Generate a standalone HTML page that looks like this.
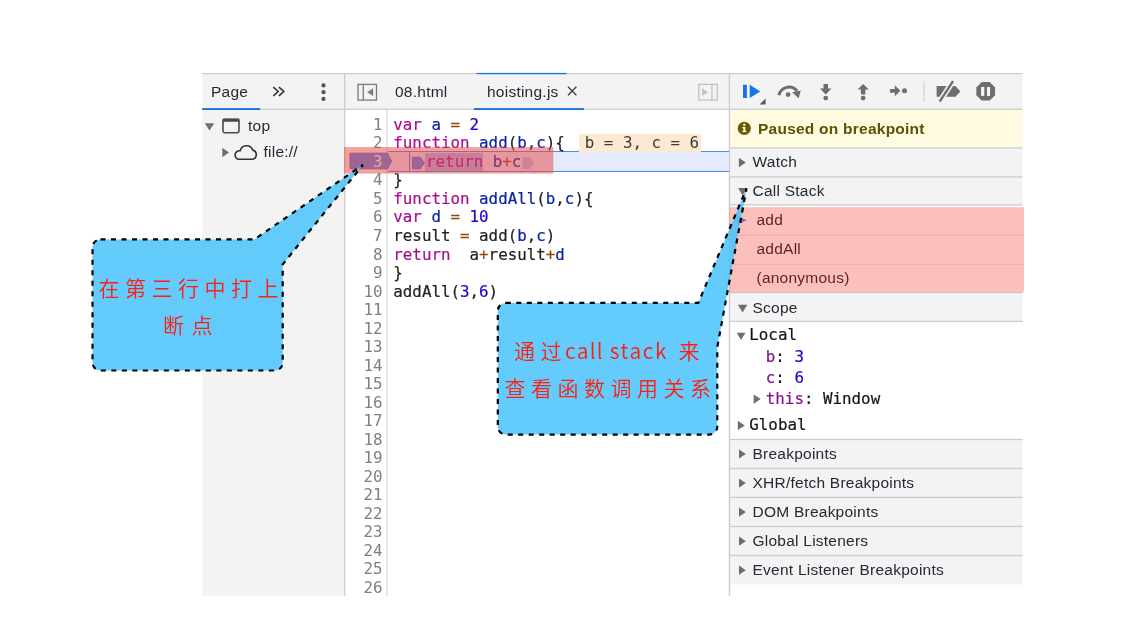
<!DOCTYPE html>
<html lang="zh">
<head>
<meta charset="utf-8">
<title>Sources debugger</title>
<style>
html,body{margin:0;padding:0;background:#fff;}
body{width:1142px;height:636px;position:relative;overflow:hidden;font-family:"Liberation Sans","Noto Sans CJK SC",sans-serif;font-size:15.5px;letter-spacing:0.24px;color:#232a35;}
.abs{position:absolute;}
.t{position:absolute;white-space:pre;line-height:20px;height:20px;}
.mono{font-family:"DejaVu Sans Mono","Liberation Mono",monospace;font-size:15.83px;letter-spacing:0;}
.sc{-webkit-text-stroke:0.2px;}
.k{color:#aa0d91}.d{color:#0d22aa}.n{color:#1c00cf}.o{color:#994500}.v{color:#0d22aa}.b{color:#151515}
#code{-webkit-text-stroke:0.2px;left:393.3px;top:115.9px;line-height:18.52px;margin:0;color:#222;}
#gut{left:346px;top:115.9px;width:36.5px;text-align:right;line-height:18.52px;margin:0;color:#808080;}
.note{color:#ff1e10;font-family:"Noto Sans CJK SC","Liberation Sans",sans-serif;font-weight:350;font-size:21px;letter-spacing:5.5px;line-height:28px;white-space:pre;}
</style>
</head>
<body>
<div id="wrap" style="position:absolute;left:0;top:0;width:1142px;height:636px;will-change:transform;">
<!-- panels -->
<svg class="abs" style="left:0;top:0;" width="1142" height="636" viewBox="0 0 1142 636">
  <!-- panel backgrounds -->
  <rect x="202.2" y="73" width="142.5" height="523" fill="#f3f3f3"/>
  <rect x="344" y="73" width="678.6" height="36.5" fill="#f3f3f3"/>
  <rect x="730" y="109.5" width="292.6" height="38.5" fill="#fffbe1"/>
  <rect x="730" y="148" width="292.6" height="57" fill="#f3f3f3"/>
  <rect x="730" y="292.6" width="292.6" height="28.5" fill="#f3f3f3"/>
  <rect x="730" y="439.5" width="292.6" height="145" fill="#f3f3f3"/>
  <!-- horizontal rules -->
  <g fill="#cdcdcd">
    <rect x="202.2" y="72.95" width="820.4" height="1.3"/>
    <rect x="202.2" y="108.65" width="820.4" height="1.3"/>
    <rect x="730" y="147.35" width="292.6" height="1.3"/>
    <rect x="730" y="176.25" width="292.6" height="1.3"/>
    <rect x="730" y="204.25" width="292.6" height="1.3"/>
    <rect x="730" y="291.95" width="292.6" height="1.3"/>
    <rect x="730" y="320.75" width="292.6" height="1.3"/>
    <rect x="730" y="438.85" width="292.6" height="1.3"/>
    <rect x="730" y="467.85" width="292.6" height="1.3"/>
    <rect x="730" y="496.75" width="292.6" height="1.3"/>
    <rect x="730" y="525.85" width="292.6" height="1.3"/>
    <rect x="730" y="554.85" width="292.6" height="1.3"/>
  </g>
  <rect x="730" y="234.6" width="292.6" height="1.2" fill="#e6e6e6"/>
  <rect x="730" y="263.7" width="292.6" height="1.2" fill="#e6e6e6"/>
  <!-- vertical rules -->
  <rect x="344.05" y="73" width="1.3" height="523" fill="#cdcdcd"/>
  <rect x="728.75" y="73" width="1.4" height="523" fill="#cdcdcd"/>
  <rect x="386.3" y="110" width="1.4" height="486" fill="#dcdcdc"/>
  <!-- tab indicators -->
  <rect x="202.2" y="108.1" width="58" height="1.9" fill="#1a73e8"/>
  <rect x="473.9" y="108.1" width="110" height="1.9" fill="#1a73e8"/>
  <rect x="476.6" y="72.9" width="90" height="1.3" fill="#1a73e8"/>
</svg>

<!-- left header -->
<div class="t" style="left:211px;top:82px;">Page</div>
<!-- tree -->
<div class="t" style="left:248px;top:115.5px;">top</div>
<div class="t" style="left:263.5px;top:142px;">file://</div>

<!-- editor tabs -->
<div class="t" style="left:395px;top:82px;">08.html</div>
<div class="t" style="left:487px;top:82px;">hoisting.js</div>


<!-- execution line + hints -->
<div class="abs" style="left:388px;top:151px;width:341px;height:19px;background:#e4ebfc;border-top:1px solid #4d86ec;border-bottom:1px solid #4d86ec;"></div>
<div class="abs" style="left:579px;top:134px;width:121.5px;height:17.5px;background:#fde8d2;"></div>
<div class="t mono" style="left:584.8px;top:132.9px;color:#3a3a3a;">b = 3, c = 6</div>
<div class="abs" style="left:425px;top:152.5px;width:58px;height:18px;background:#a6b8f7;"></div>
<svg class="abs" style="left:340px;top:145px;" width="220" height="32" viewBox="340 145 220 32">
  <path d="M350 153.2H387.4L391.6 161L387.4 168.8H350Z" fill="#4d86ec" stroke="#3b6fd0" stroke-width="1"/>
  <rect x="409" y="152.5" width="1.2" height="18" fill="#4d86ec"/>
  <path d="M412.5 157.2H420.2L424.3 163L420.2 168.8H412.5Z" fill="#4d86ec" stroke="#3b6fd0" stroke-width="1"/>
  <path d="M522.5 157.2H530.2L534.3 163L530.2 168.8H522.5Z" fill="#a9c3f3"/>
</svg>
<!-- gutter + code -->
<pre id="gut" class="abs mono">1
2
<span style="color:#fff">3</span>
4
5
6
7
8
9
10
11
12
13
14
15
16
17
18
19
20
21
22
23
24
25
26</pre>
<pre id="code" class="abs mono"><span class="k">var</span> <span class="d">a</span> <span class="o">=</span> <span class="n">2</span>
<span class="k">function</span> <span class="d">add</span>(<span class="d">b</span>,<span class="d">c</span>){
  <span style="display:inline-block;width:13.7px"></span><span class="k">return</span> <span class="v">b</span><span class="o">+</span><span class="v">c</span>
}
<span class="k">function</span> <span class="d">addAll</span>(<span class="d">b</span>,<span class="d">c</span>){
<span class="k">var</span> <span class="d">d</span> <span class="o">=</span> <span class="n">10</span>
result <span class="o">=</span> add(<span class="v">b</span>,<span class="v">c</span>)
<span class="k">return</span>  a<span class="o">+</span>result<span class="o">+</span><span class="v">d</span>
}
addAll(<span class="n">3</span>,<span class="n">6</span>)</pre>

<!-- right panel -->
<div class="t" style="left:758px;top:119px;font-weight:bold;color:#5c5200;">Paused on breakpoint</div>
<div class="t" style="left:752.5px;top:151.5px;">Watch</div>
<div class="t" style="left:752.5px;top:180.5px;">Call Stack</div>
<div class="t" style="left:756.5px;top:209.5px;color:#000;">add</div>
<div class="t" style="left:756.5px;top:238.5px;color:#000;">addAll</div>
<div class="t" style="left:756.5px;top:267.5px;color:#000;">(anonymous)</div>
<div class="t" style="left:752.5px;top:297.5px;">Scope</div>
<div class="t mono b sc" style="left:749.3px;top:325px;">Local</div>
<div class="t mono sc" style="left:765.8px;top:346.5px;"><span style="color:#881391">b</span><span class="b">: </span><span class="n">3</span></div>
<div class="t mono sc" style="left:765.8px;top:367.5px;"><span style="color:#881391">c</span><span class="b">: </span><span class="n">6</span></div>
<div class="t mono sc" style="left:765.8px;top:389px;"><span style="color:#881391">this</span><span class="b">: Window</span></div>
<div class="t mono b sc" style="left:749.3px;top:415px;">Global</div>
<div class="t" style="left:752.5px;top:443.5px;">Breakpoints</div>
<div class="t" style="left:752.5px;top:472.5px;">XHR/fetch Breakpoints</div>
<div class="t" style="left:752.5px;top:501.5px;">DOM Breakpoints</div>
<div class="t" style="left:752.5px;top:530.5px;">Global Listeners</div>
<div class="t" style="left:752.5px;top:559.5px;">Event Listener Breakpoints</div>

<!-- icons -->
<svg class="abs" style="left:202px;top:73px;" width="821" height="130" viewBox="202 73 821 130">
  <!-- more tabs chevron + menu dots -->
  <path d="M273.3 87.2L278.2 91.5L273.3 95.8M278.9 87.2L283.8 91.5L278.9 95.8" fill="none" stroke="#333" stroke-width="1.6"/>
  <circle cx="323.5" cy="85.4" r="2.1" fill="#555"/><circle cx="323.5" cy="92.2" r="2.1" fill="#555"/><circle cx="323.5" cy="98.9" r="2.1" fill="#555"/>
  <!-- tree arrows -->
  <path d="M204.8 123.3H214.2L209.5 130.4Z" fill="#6e6e6e"/>
  <path d="M222.3 147.7V157.2L229 152.45Z" fill="#6e6e6e"/>
  <!-- frame icon -->
  <rect x="223" y="119.6" width="16" height="13.1" rx="1.6" fill="none" stroke="#4a4a4a" stroke-width="1.6"/>
  <rect x="222.6" y="118.4" width="16.8" height="3.4" rx="1" fill="#4a4a4a"/>
  <!-- cloud -->
  <path d="M238.6 159.3H252.3A4.7 4.7 0 0 0 252.7 150.1A6.5 6.5 0 0 0 240.2 150.8A4.3 4.3 0 0 0 238.6 159.3Z" fill="none" stroke="#333" stroke-width="1.6" stroke-linejoin="round"/>
  <!-- navigator toggles -->
  <rect x="358" y="84.4" width="18.5" height="15.7" fill="none" stroke="#7a7a7a" stroke-width="1.3"/>
  <rect x="362.6" y="84.4" width="1.3" height="15.7" fill="#7a7a7a"/>
  <path d="M367.2 92.2L373.1 88.3V96.1Z" fill="#7a7a7a"/>
  <rect x="698.8" y="84.4" width="18.5" height="15.7" fill="none" stroke="#c2c2c2" stroke-width="1.3"/>
  <rect x="711.3" y="84.4" width="1.3" height="15.7" fill="#c2c2c2"/>
  <path d="M708 92.2L702.1 88.3V96.1Z" fill="#c2c2c2"/>
  <!-- close x -->
  <path d="M568 86.8L576.4 95.2M576.4 86.8L568 95.2" stroke="#444" stroke-width="1.4" fill="none"/>
  <!-- resume -->
  <rect x="743" y="84.8" width="3.9" height="13.2" fill="#1a73e8"/>
  <path d="M749.7 84.8L760.2 91.4L749.7 98Z" fill="#1a73e8"/>
  <path d="M765.6 98.4V104.4H759.5Z" fill="#5a5a5a"/>
  <!-- step over -->
  <path d="M779 95.3A10.2 10.2 0 0 1 797 91" fill="none" stroke="#6e6e6e" stroke-width="3"/>
  <path d="M792.2 92.2L800.8 90.6L798.6 98.3Z" fill="#6e6e6e"/>
  <circle cx="788.1" cy="94.6" r="2.3" fill="#6e6e6e"/>
  <!-- step into -->
  <path d="M823.5 84H828V88.6H831.5L825.75 94.6L820 88.6H823.5Z" fill="#6e6e6e"/>
  <circle cx="825.75" cy="98.1" r="2.4" fill="#6e6e6e"/>
  <!-- step out -->
  <path d="M860.9 94.6H865.4V89.4H868.8L863.15 84L857.5 89.4H860.9Z" fill="#6e6e6e"/>
  <circle cx="863.15" cy="98.1" r="2.4" fill="#6e6e6e"/>
  <!-- step -->
  <path d="M890 88.9H894.8V85.2L900.3 90.8L894.8 96.3V92.8H890Z" fill="#6e6e6e"/>
  <circle cx="904.5" cy="90.8" r="2.5" fill="#6e6e6e"/>
  <!-- divider -->
  <rect x="923.4" y="81" width="1" height="20.7" fill="#cacaca"/>
  <!-- deactivate breakpoints -->
  <path d="M936.6 86.1H955.5L960.3 91.4L955.5 96.7H936.6Z" fill="#6e6e6e"/>
  <path d="M939.2 102.4L953.5 80.3" stroke="#f3f3f3" stroke-width="5.6" fill="none"/>
  <path d="M939.7 101.6L953 81.1" stroke="#6e6e6e" stroke-width="2.4" fill="none"/>
  <!-- pause on exceptions -->
  <path d="M981.7 82.1H989.7L995.1 87.5V95.2L989.7 100.6H981.7L976.3 95.2V87.5Z" fill="#6e6e6e"/>
  <rect x="981.1" y="87" width="3.2" height="8.9" fill="#f6f6f6"/>
  <rect x="987" y="87" width="3.1" height="8.9" fill="#f6f6f6"/>
  <!-- info icon -->
  <circle cx="744.3" cy="128.3" r="6.6" fill="#6b5a00"/>
  <rect x="743.3" y="127" width="2.1" height="5" fill="#fffbe0"/>
  <rect x="742.4" y="127" width="2" height="1.1" fill="#fffbe0"/>
  <rect x="742.4" y="131" width="3.9" height="1.1" fill="#fffbe0"/>
  <circle cx="744.3" cy="124.7" r="1.2" fill="#fffbe0"/>
  <!-- section arrows -->
  <path d="M738.9 157.8V167.2L745.7 162.5Z" fill="#6e6e6e"/>
  <path d="M738 188H747.4L742.7 195.6Z" fill="#6e6e6e"/>
</svg>
<svg class="abs" style="left:730px;top:200px;" width="293" height="396" viewBox="730 200 293 396">
  <path d="M737 215.6L746.9 220.3L737 225Z" fill="#4d86ec"/>
  <path d="M737.9 304.8H747.3L742.6 312.4Z" fill="#6e6e6e"/>
  <path d="M736.7 332.8H745.5L741.1 340.1Z" fill="#6e6e6e"/>
  <path d="M753.7 394.4V403.8L760.7 399.1Z" fill="#6e6e6e"/>
  <path d="M737.8 420.8V430L744.8 425.4Z" fill="#6e6e6e"/>
  <path d="M739 449.40V458.60L745.8 454.00Z" fill="#6e6e6e"/>
  <path d="M739 478.45V487.65L745.8 483.05Z" fill="#6e6e6e"/>
  <path d="M739 507.50V516.70L745.8 512.10Z" fill="#6e6e6e"/>
  <path d="M739 536.55V545.75L745.8 541.15Z" fill="#6e6e6e"/>
  <path d="M739 565.60V574.80L745.8 570.20Z" fill="#6e6e6e"/>
</svg>

<!-- annotation overlays -->
<svg class="abs" style="left:0;top:0;" width="1142" height="636" viewBox="0 0 1142 636">
  <rect x="344" y="147.1" width="209.3" height="26.5" fill="rgba(232,72,68,0.52)"/>
  <rect x="729.4" y="207.2" width="294.6" height="85" fill="rgba(244,90,78,0.38)"/>
  <path d="M100.5 239.4H254.3L363 164.8L282.7 264.4V362.5A8 8 0 0 1 274.7 370.5H100.5A8 8 0 0 1 92.5 362.5V247.4A8 8 0 0 1 100.5 239.4Z" fill="rgba(78,197,252,0.88)" stroke="#000" stroke-width="2.2" stroke-dasharray="5 5.5"/>
  <path d="M505.8 302.9H698.3L746.5 188.5L717.3 347V426.6A8 8 0 0 1 709.3 434.6H505.8A8 8 0 0 1 497.8 426.6V310.9A8 8 0 0 1 505.8 302.9Z" fill="rgba(78,197,252,0.88)" stroke="#000" stroke-width="2.2" stroke-dasharray="5 5.5"/>
</svg>
<div class="abs note" style="left:98.5px;top:273px;">在第三行中打上</div>
<div class="abs note" style="left:163px;top:310px;letter-spacing:7.5px;">断点</div>
<div class="abs note" style="left:514px;top:336px;">通过<span style="letter-spacing:1.3px;margin-left:-2px;">call </span><span style="letter-spacing:1.6px;margin-left:-0.3px;margin-right:4.2px;">stack </span>来</div>
<div class="abs note" style="left:504.5px;top:373px;">查看函数调用关系</div>

</div>
</body>
</html>
